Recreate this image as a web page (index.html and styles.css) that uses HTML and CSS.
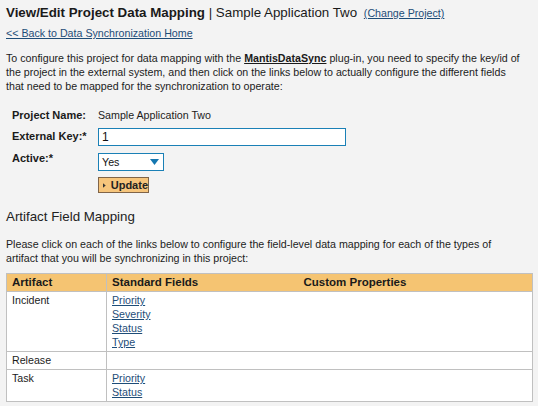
FILE: index.html
```html
<!DOCTYPE html>
<html>
<head>
<meta charset="utf-8">
<link rel="stylesheet" href="styles.css">
</head>
<body>
<div class="page">
  <h1 class="title"><strong>View/Edit Project Data Mapping</strong> | Sample Application Two <a class="change" href="#">(Change Project)</a></h1>
  <div class="back"><a href="#">&lt;&lt; Back to Data Synchronization Home</a></div>
  <p class="intro">To configure this project for data mapping with the <a class="plugin" href="#">MantisDataSync</a> plug-in, you need to specify the key/id of the project in the external system, and then click on the links below to actually configure the different fields that need to be mapped for the synchronization to operate:</p>

  <div class="form">
    <div class="row row-name">
      <div class="label">Project Name:</div>
      <div class="value">Sample Application Two</div>
    </div>
    <div class="row row-key">
      <div class="label">External Key:*</div>
      <div class="field"><input class="text-input" type="text" value="1"></div>
    </div>
    <div class="row row-active">
      <div class="label">Active:*</div>
      <div class="field">
        <div class="select">
          <span class="select-value">Yes</span>
          <svg class="select-arrow" width="9" height="6" viewBox="0 0 9 6"><polygon points="0,0 9,0 4.5,6" fill="#1577b0"/></svg>
        </div>
      </div>
    </div>
    <div class="row row-btn">
      <div class="label"></div>
      <div class="field">
        <button class="btn" type="button"><svg class="btn-arrow" width="3" height="5" viewBox="0 0 3 5"><polygon points="0,0 3,2.5 0,5" fill="#333"/></svg>Update</button>
      </div>
    </div>
  </div>

  <h2 class="heading">Artifact Field Mapping</h2>
  <p class="intro2">Please click on each of the links below to configure the field-level data mapping for each of the types of artifact that you will be synchronizing in this project:</p>

  <table class="grid">
    <colgroup>
      <col class="c1">
      <col class="c2">
      <col class="c3">
    </colgroup>
    <thead>
      <tr>
        <th class="h1c">Artifact</th>
        <th class="h2c">Standard Fields</th>
        <th class="h3c">Custom Properties</th>
      </tr>
    </thead>
    <tbody>
      <tr>
        <td class="a">Incident</td>
        <td class="s"><a href="#">Priority</a><br><a href="#">Severity</a><br><a href="#">Status</a><br><a href="#">Type</a></td>
        <td class="p"></td>
      </tr>
      <tr>
        <td class="a">Release</td>
        <td class="s"></td>
        <td class="p"></td>
      </tr>
      <tr>
        <td class="a">Task</td>
        <td class="s"><a href="#">Priority</a><br><a href="#">Status</a></td>
        <td class="p"></td>
      </tr>
    </tbody>
  </table>
</div>
</body>
</html>
```

FILE: styles.css
```css
html, body {
  margin: 0;
  padding: 0;
  background: #f3f3f3;
}
body {
  font-family: "Liberation Sans", Arial, sans-serif;
  font-size: 10.67px;
  color: #1c1c1c;
}
a {
  color: #1e4d78;
  text-decoration: underline;
}
.page {
  padding: 5px 5px 0 6px;
}
.title {
  margin: 0;
  font-size: 13.33px;
  line-height: 16px;
  font-weight: normal;
  color: #1a1a1a;
}
.title strong {
  font-weight: bold;
}
.change {
  font-size: 10.67px;
  margin-left: 3px;
}
.back {
  margin-top: 5px;
  line-height: 14px;
}
.intro {
  margin: 11px 0 0;
  line-height: 14px;
  padding-right: 8px;
}
.plugin {
  color: #1a1a1a;
  font-weight: bold;
}
.form {
  margin: 15px 0 0 6px;
}
.row {
  display: flex;
  align-items: flex-start;
}
.label {
  width: 86px;
  font-weight: bold;
  font-size: 11px;
  line-height: 14px;
  color: #1a1a1a;
}
.value {
  line-height: 14px;
}
.row-name {
  height: 14px;
}
.row-key {
  margin-top: 6px;
}
.row-key .label {
  margin-top: 1px;
}
.text-input {
  box-sizing: border-box;
  width: 248px;
  height: 18px;
  margin: 0;
  padding: 0 3px;
  border: 1px solid #1a80b6;
  background: #fff;
  font-family: "Liberation Sans", Arial, sans-serif;
  font-size: 12px;
  color: #111;
  outline: none;
}
.text-input, .select {
  display: block;
}
.row-active {
  margin-top: 5px;
}
.row-active .field {
  padding-top: 2px;
}
.select {
  box-sizing: border-box;
  width: 66px;
  height: 18px;
  border: 1px solid #1a80b6;
  background: #fff;
  display: flex;
  align-items: center;
  justify-content: space-between;
  padding: 0 4px 0 3px;
  font-size: 10.67px;
  color: #111;
}
.select-arrow {
  display: block;
}
.row-btn {
  margin-top: 6px;
}
.btn {
  box-sizing: border-box;
  width: 51px;
  height: 16px;
  margin: 0;
  padding: 0 0 0 4px;
  display: flex;
  align-items: center;
  gap: 5px;
  border: 1px solid #806448;
  background: #f6c57c;
  font-family: "Liberation Sans", Arial, sans-serif;
  font-size: 11px;
  font-weight: bold;
  color: #222;
}
.btn-arrow {
  display: block;
}
.heading {
  margin: 16px 0 0;
  font-size: 13.33px;
  line-height: 16px;
  font-weight: normal;
  color: #222;
}
.intro2 {
  margin: 12px 0 0;
  line-height: 14px;
  padding-right: 8px;
}
.grid {
  margin-top: 8px;
  border-collapse: collapse;
  width: 527px;
  table-layout: fixed;
  background: #fff;
  border: 1px solid #c0c0c0;
}
.c1 { width: 100px; }
.c2 { width: 192px; }
.c3 { width: auto; }
.grid th {
  background: #f5c472;
  text-align: left;
  font-weight: bold;
  font-size: 11.5px;
  color: #1a1a1a;
  line-height: 14px;
  padding: 1px 5px 2px;
  border-top: 1px solid #c0c0c0;
  border-bottom: 1px solid #c0c0c0;
}
.grid td {
  vertical-align: top;
  line-height: 14px;
  padding: 1px 5px 2px;
  border-top: 1px solid #c0c0c0;
  border-bottom: 1px solid #c0c0c0;
}
.grid .h1c, .grid .a {
  border-right: 1px solid #c0c0c0;
}
```
